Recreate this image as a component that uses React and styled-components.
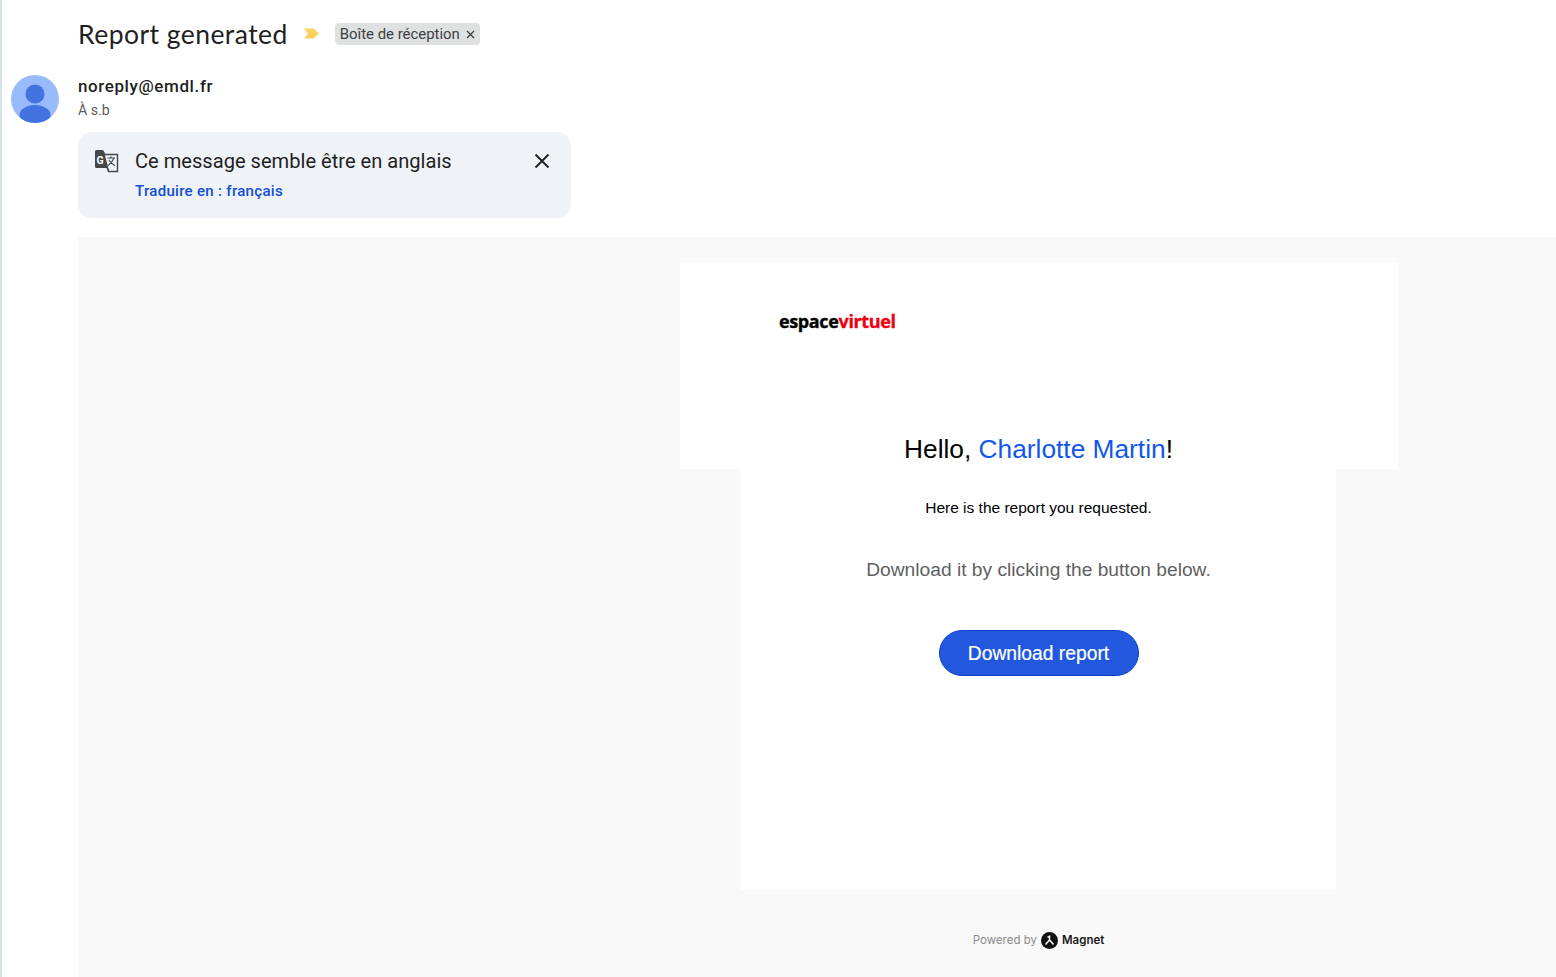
import React from 'react';
import styled, { createGlobalStyle } from 'styled-components';

const Global = createGlobalStyle`
  html, body { margin: 0; padding: 0; background: #fff; height: 100%; overflow: hidden; }
  #root { height: 100%; }
  * { box-sizing: border-box; }
`;

const Page = styled.div`
  display: grid;
  grid-template-columns: 76px 1fr;
  grid-template-rows: 237px 1fr;
  height: 977px;
  width: 1556px;
  border-left: 2px solid #d5e3ee;
  overflow: hidden;
  font-family: Roboto, "Liberation Sans", sans-serif;
  color: #1f1f1f;
`;
const Gutter = styled.div`
  padding: 74.5px 0 0 8.5px;
  grid-row: 1 / 3;
`;
const Avatar = styled.svg`
  display: block;
  width: 48px;
  height: 48px;
`;
const Header = styled.div`
  display: flex;
  flex-direction: column;
  align-items: flex-start;
`;
const SubjectRow = styled.div`
  display: flex;
  align-items: center;
  height: 44px;
  margin-top: 12px;
`;
const Subject = styled.h1`
  margin: 0;
  font: 400 26.5px/44px Lato, sans-serif;
  letter-spacing: 0.45px;
  color: #1f1f1f;
  white-space: nowrap;
`;
const Importance = styled.svg`
  display: block;
  width: 15px;
  height: 11px;
  margin: 0 16px 1px 16px;
`;
const Chip = styled.span`
  display: inline-flex;
  align-items: center;
  height: 22px;
  padding: 0 5px;
  gap: 6px;
  background: #dfe1e0;
  border-radius: 4px;
  font: 400 14.9px/20px Roboto, sans-serif;
  color: #3c4043;
  margin-bottom: 1px;
`;
const ChipClose = styled.svg`
  display: block;
  width: 9px;
  height: 9px;
  margin-top: 1px;
`;
const Sender = styled.div`
  margin-top: 20px;
  font: 500 17px/20px Roboto, sans-serif;
  letter-spacing: 0.6px;
  color: #1f1f1f;
`;
const Recipient = styled.div`
  margin-top: 5px;
  font: 400 14.2px/18px Roboto, sans-serif;
  color: #5e5e5e;
`;
const Notice = styled.div`
  margin-top: 13px;
  width: 493px;
  height: 86px;
  background: #eff2f7;
  border-radius: 14px;
  display: grid;
  grid-template-columns: 57px 1fr 52px;
  padding-top: 16px;
`;
const NoticeIcon = styled.svg`
  display: block;
  width: 26px;
  height: 26px;
  margin-left: 15px;
`;
const NoticeText = styled.div`
  display: flex;
  flex-direction: column;
`;
const NoticeTitle = styled.div`
  font: 400 20.1px/26px Roboto, sans-serif;
  color: #1f1f1f;
`;
const NoticeLink = styled.a`
  margin-top: 7px;
  font: 500 15px/20px Roboto, sans-serif;
  letter-spacing: 0.3px;
  color: #0f4fd8;
`;
const NoticeClose = styled.svg`
  display: block;
  width: 16px;
  height: 16px;
  margin: 5px 0 0 15px;
`;
const Mail = styled.main`
  background: #f9f9fa;
  padding: 25px 0 0 601.5px;
  overflow: hidden;
`;
const Wrapper = styled.div`
  width: 718px;
  display: flex;
  flex-direction: column;
  align-items: center;
`;
const TopCard = styled.section`
  width: 100%;
  height: 207px;
  background: #fff;
  display: flex;
  flex-direction: column;
`;
const Logo = styled.div`
  margin: 47px 0 0 99.5px;
  font: 700 18px/24px "Open Sans", sans-serif;
  letter-spacing: -0.37px;
  -webkit-text-stroke: 0.35px currentColor;
  color: #000;
`;
const LogoAccent = styled.span`
  color: #ee0011;
`;
const Greeting = styled.h2`
  margin: 101px 0 0;
  font: 400 26.3px/30px "Liberation Sans", Arial, sans-serif;
  color: #000;
  text-align: center;
`;
const Name = styled.span`
  color: #1257ec;
`;
const BodyCard = styled.section`
  width: 595px;
  height: 421px;
  background: #fff;
  display: flex;
  flex-direction: column;
  align-items: center;
`;
const Lead = styled.p`
  margin: 29px 0 0;
  font: 400 15.5px/20px "Liberation Sans", Arial, sans-serif;
  color: #000;
`;
const Hint = styled.p`
  margin: 40px 0 0;
  font: 400 19.2px/24px "Liberation Sans", Arial, sans-serif;
  color: #5f5f5f;
`;
const Download = styled.button`
  margin-top: 48px;
  width: 200px;
  height: 46px;
  padding: 1px 0 0;
  border-radius: 23px;
  border: 1px solid #0b3fc8;
  background: #2158dd;
  color: #fff;
  font: 400 19.3px/24px "Liberation Sans", Arial, sans-serif;
  -webkit-text-stroke: 0.2px currentColor;
`;
const Powered = styled.div`
  margin-top: 41px;
  display: flex;
  align-items: center;
  gap: 4px;
  height: 18px;
  font: 400 11.5px/18px Inter, sans-serif;
  color: #8a8a8a;
`;
const MagnetMark = styled.svg`
  display: block;
  width: 17px;
  height: 17px;
`;
const MagnetName = styled.span`
  font: 600 11.5px/18px Inter, sans-serif;
  color: #1a1a1a;
`;

export default function App() {
  return (
    <>
      <Global />
      <Page>
        <Gutter>
          <Avatar viewBox="0 0 48 48">
            <defs><clipPath id="av"><circle cx="24" cy="24" r="24" /></clipPath></defs>
            <circle cx="24" cy="24" r="24" fill="#99bbfb" />
            <g clipPath="url(#av)" fill="#4273e0">
              <circle cx="24" cy="19" r="9.5" />
              <ellipse cx="24" cy="40" rx="15.5" ry="10" />
            </g>
          </Avatar>
        </Gutter>
        <Header>
          <SubjectRow>
            <Subject>Report generated</Subject>
            <Importance viewBox="0 0 15 11">
              <path d="M0 0.5H9.5L15 5.5L9.5 10.5H0L4 5.5Z" fill="#fdd15f" />
            </Importance>
            <Chip>
              Boîte de réception
              <ChipClose viewBox="0 0 9 9">
                <path d="M1 1L8 8M8 1L1 8" stroke="#3c4043" strokeWidth="1.3" />
              </ChipClose>
            </Chip>
          </SubjectRow>
          <Sender>noreply@emdl.fr</Sender>
          <Recipient>À s.b</Recipient>
          <Notice>
            <NoticeIcon viewBox="0 0 26 26">
              <path d="M2 3.5Q2 2 3.5 2H10L12 5H11.5L16 20H3.5Q2 20 2 18.5Z" fill="#444746" />
              <path d="M11 6.5H24.5V23.5H15.5L11 6.5Z" fill="#eff2f7" stroke="#444746" strokeWidth="1.4" />
              <text x="3.6" y="15.6" fontFamily="Roboto, sans-serif" fontWeight="700" fontSize="10.5" fill="#fff">G</text>
              <path d="M14.5 10H22M18 8.5V10M21 10Q19 15 15 17.5M16 12Q18 15.5 22 17.5" fill="none" stroke="#444746" strokeWidth="1.1" />
              <path d="M15.5 20H13.5L15.5 24Z" fill="#444746" />
            </NoticeIcon>
            <NoticeText>
              <NoticeTitle>Ce message semble être en anglais</NoticeTitle>
              <NoticeLink>Traduire en : français</NoticeLink>
            </NoticeText>
            <NoticeClose viewBox="0 0 16 16">
              <path d="M1.5 1.5L14.5 14.5M14.5 1.5L1.5 14.5" stroke="#1f1f1f" strokeWidth="1.8" />
            </NoticeClose>
          </Notice>
        </Header>
        <Mail>
          <Wrapper>
            <TopCard>
              <Logo>espace<LogoAccent>virtuel</LogoAccent></Logo>
              <Greeting>Hello, <Name>Charlotte Martin</Name>!</Greeting>
            </TopCard>
            <BodyCard>
              <Lead>Here is the report you requested.</Lead>
              <Hint>Download it by clicking the button below.</Hint>
              <Download>Download report</Download>
            </BodyCard>
            <Powered>
              Powered by
              <MagnetMark viewBox="0 0 17 17">
                <circle cx="8.5" cy="8.5" r="8.5" fill="#111" />
                <path d="M8.5 3.5L8.5 8M8.5 8L4.5 12.5M8.5 8L12.5 12.5M6.5 5H8.5" fill="none" stroke="#fff" strokeWidth="1.5" />
              </MagnetMark>
              <MagnetName>Magnet</MagnetName>
            </Powered>
          </Wrapper>
        </Mail>
      </Page>
    </>
  );
}
